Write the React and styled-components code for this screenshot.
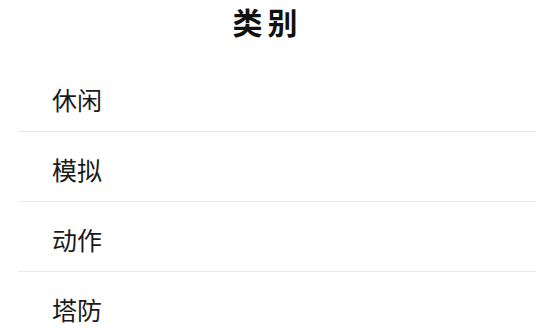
import React from "react";
import styled, { createGlobalStyle } from "styled-components";

const GlobalStyle = createGlobalStyle`
  body {
    margin: 0;
    background: #ffffff;
    font-family: "Noto Sans CJK SC", "Noto Sans", sans-serif;
  }
`;

const Page = styled.div`
  width: 546px;
  height: 328px;
  overflow: hidden;
  background: #ffffff;
`;

const Header = styled.div`
  height: 62px;
  display: flex;
  justify-content: center;
  align-items: flex-start;
`;

const Title = styled.h1`
  margin: 0;
  padding-right: 11px;
  font-size: 30px;
  line-height: 42px;
  font-weight: 700;
  letter-spacing: 5px;
  color: #111111;
`;

const List = styled.ul`
  list-style: none;
  margin: 0;
  padding: 0 10px 0 18px;
`;

const Item = styled.li`
  height: 63px;
  padding: 6px 0 0 34px;
  border-bottom: 1px solid #e9e9e9;
  font-size: 25px;
  line-height: 63px;
  color: #1a1a1a;
`;

const categories = ["休闲", "模拟", "动作", "塔防"];

const App = () => {
  return (
    <Page>
      <GlobalStyle />
      <Header>
        <Title>类别</Title>
      </Header>
      <List>
        {categories.map((name) => (
          <Item key={name}>{name}</Item>
        ))}
      </List>
    </Page>
  );
};

export default App;
